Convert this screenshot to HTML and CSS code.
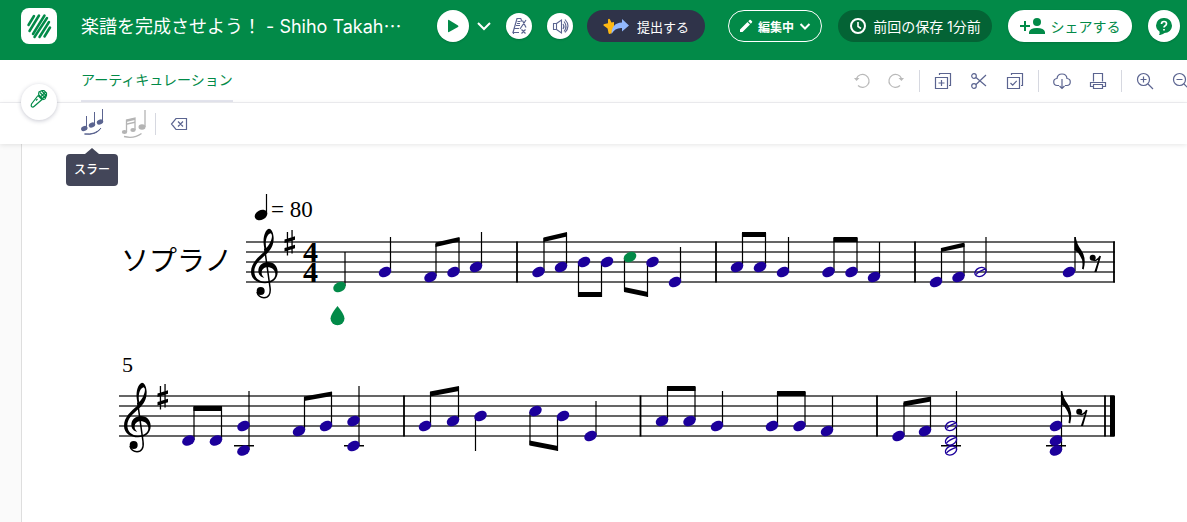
FILE: index.html
```html
<!DOCTYPE html>
<html lang="ja">
<head>
<meta charset="utf-8">
<meta name="viewport" content="width=device-width, initial-scale=1">
<title>楽譜を完成させよう！</title>
<link rel="stylesheet" href="styles.css">
</head>
<body>
<header class="topbar">
  <a class="logo" href="#" aria-label="ホーム">
    <svg width="36" height="36" viewBox="0 0 36 36" fill="none" stroke="#028a48" stroke-width="2.500" stroke-linecap="round"><path d="M7.500 17 13 8M8.500 23 18 7.500M12 26 23.500 7.500M13.500 29 26 10M18.500 29 28 14M23.500 28.500 29 19.500"/></svg>
  </a>
  <h1 class="title">楽譜を完成させよう！ - Shiho Takah<span class="dots">…</span></h1>
  <div class="player">
    <button class="round" aria-label="再生"><svg width="32" height="32" viewBox="0 0 32 32"><path d="M11 10.500v11q0 1 1 .5L21 17q1-.8 0-1.600L12 10q-1-.5-1 .5z" fill="#028a48"/></svg></button>
    <button class="caret" aria-label="再生オプション"><svg width="16" height="16" viewBox="0 0 16 16" fill="none" stroke="#fff" stroke-width="2"><path d="M2 5l6 6 6-6"/></svg></button>
  </div>
  <button class="round small metronome" aria-label="メトロノーム"><svg width="26" height="26" viewBox="0 0 26 26" fill="none" stroke="#5b6490" stroke-width="1.200"><path d="M15 5.500h-4L7 19.500h6M15 5.500l.5 3M11.500 8.500h3M11 10.500h3M10 12.500h4M8.500 15.500H13M20 7l-6 9M16.500 7.500l3.500 7M7.500 19.500V21M15.500 16.500l4 4M19.500 16.500l-4 4"/></svg></button>
  <button class="round small sound" aria-label="音量"><svg width="26" height="26" viewBox="0 0 26 26" fill="none" stroke="#5b6490" stroke-width="1.100"><path d="M6.500 10.500v6h3v-6zM9.500 10.500l5-3.500v13l-5-3.500M16 11q2 2.500 0 5M17 8.500q4 5 0 10M18 6.500q6 6.500 0 13"/></svg></button>
  <button class="pill submit">
    <svg width="26" height="18" viewBox="0 0 26 18"><path d="M5 2.500q1-1.500 2 0l1.500 3 2.500-.5V13l-3 3.500q-2 1-2.500-.5l-.9-4.500L.500 8.500Q0 7 1.500 7L5 6.300z" fill="#fdb813"/><path d="M8.500 17Q8.500 6 19 5.500V2l7 6.500-7 6V11q-7-.5-10.500 6z" fill="#92b9ff"/></svg>
    提出する</button>
  <button class="pill mode">
    <svg width="14" height="14" viewBox="0 0 14 14" fill="#fff"><path d="M1 10.500 8.500 3 11 5.500 3.500 13H1zM9.300 2.200l1.200-1.200q.6-.5 1.200 0L13 2.300q.5.600 0 1.200l-1.200 1.200z"/></svg>
    編集中
    <svg width="12" height="12" viewBox="0 0 12 12" fill="none" stroke="#fff" stroke-width="2"><path d="M1.500 4 6 8.500 10.500 4"/></svg></button>
  <button class="pill saved">
    <svg width="18" height="18" viewBox="0 0 18 18" fill="none" stroke="#fff" stroke-width="2"><circle cx="9" cy="9" r="7"/><path d="M9 5v4.500l3 2" stroke-width="1.600"/></svg>
    前回の保存 1分前</button>
  <button class="pill share">
    <svg width="26" height="18" viewBox="0 0 26 18" fill="#028a48"><path d="M4 4h2v4h4v2H6v4H4v-4H0V8h4z"/><circle cx="17" cy="5" r="4"/><path d="M9 17v-2q1-4 8-4t8 4v2z"/></svg>
    シェアする</button>
  <button class="round help" aria-label="ヘルプ"><svg width="32" height="32" viewBox="0 0 32 32"><path d="M16 8a7.500 7.500 0 0 1 8 7.500c0 4.500-3.500 7.500-7.500 7.500-2 1.500-4 2-5.500 2q1-1.500.5-3.500A7.500 7.500 0 0 1 8 15.500 7.500 7.500 0 0 1 16 8z" fill="#028a48"/><path d="M13.500 14q0-2.500 2.500-2.500t2.500 2.200q0 1.300-1.300 2.100T16 17.500M16 19v1.600" fill="none" stroke="#fff" stroke-width="1.700"/></svg></button>
</header>

<nav class="tabs">
  <a class="tab" href="#">アーティキュレーション</a>
  <div class="tools">
    <div class="group history">
      <button aria-label="元に戻す" disabled><svg class="ico" viewBox="0 0 24 24"><path d="M6.500 9.500A6.500 6.500 0 1 1 8 16.500"/><path class="solid" d="M4 9h5.500L6.500 12z"/></svg></button>
      <button aria-label="やり直す" disabled><svg class="ico" viewBox="0 0 24 24"><path d="M17.500 9.500A6.500 6.500 0 1 0 16 16.500"/><path class="solid" d="M20 9h-5.500l3 3z"/></svg></button>
    </div>
    <div class="group">
      <button aria-label="コピー"><svg class="ico" viewBox="0 0 24 24"><path d="M4.500 8.500h12v11h-12zM8.500 6V4.500h11v12H18M10.500 11v6M7.500 14h6"/></svg></button>
      <button aria-label="切り取り"><svg class="ico" viewBox="0 0 24 24"><circle cx="7" cy="7" r="2.300"/><circle cx="7" cy="17" r="2.300"/><path d="M9 8.500l10 8.500M9 15.500 19 6"/></svg></button>
      <button aria-label="貼り付け"><svg class="ico" viewBox="0 0 24 24"><path d="M4.500 8.500h12v11h-12zM8.500 6V4.500h11v12H18M7.500 14l2.200 2.200 4-4.400"/></svg></button>
    </div>
    <div class="group">
      <button aria-label="ダウンロード"><svg class="ico" viewBox="0 0 24 24"><path d="M9 16.500H7.500a3.500 3.500 0 0 1-.5-7Q7.500 5 12 5t5 4.500a3.500 3.500 0 0 1-.5 7H15M12 10v9.500M9.500 17l2.500 2.500 2.500-2.500"/></svg></button>
      <button aria-label="印刷"><svg class="ico" viewBox="0 0 24 24"><path d="M7.500 12.500v-8h9v8M7.500 17.500h-3v-4h15v4h-3M7.500 15.500h9v4h-9z"/></svg></button>
    </div>
    <div class="group">
      <button aria-label="拡大"><svg class="ico" viewBox="0 0 24 24"><circle cx="10.500" cy="10.500" r="6"/><path d="M15 15l5 5M10.500 7.500v6M7.500 10.500h6"/></svg></button>
      <button aria-label="縮小"><svg class="ico" viewBox="0 0 24 24"><circle cx="10.500" cy="10.500" r="6"/><path d="M15 15l5 5M7.500 10.500h6"/></svg></button>
    </div>
  </div>
  <button class="mic" aria-label="パート"><svg width="20" height="20" viewBox="0 0 20 20" fill="none" stroke="#028a48" stroke-width="1.200"><path d="M9 6.500 2.500 15q-.8 2 .3 2.800t2.500-.5L13 10.500M9 6.500l4 4M9.500 5.500l4.500 5 2-.5M9.500 5.500l.5-2.500 3-1.500h2l2.500 2.500v2.500L16 10M11 3.500l5.500 5.500M13 2l4 4.500M16.500 3 11.500 8M17.500 5.500 13.500 9.500M7 11.500l1.500-1.500"/></svg></button>
</nav>

<div class="articulations">
  <div class="slur">
    <button aria-label="スラー" aria-describedby="slur-tip"><svg width="24" height="30" viewBox="0 0 24 30" fill="#5b6490"><ellipse cx="3.300" cy="21.500" rx="3.300" ry="2.500" transform="rotate(-20 3.300 21.500)"/><ellipse cx="11" cy="18" rx="3.300" ry="2.500" transform="rotate(-20 11 18)"/><ellipse cx="19" cy="15" rx="3.300" ry="2.500" transform="rotate(-20 19 15)"/><path d="M5.500 9v12M13.500 5v13M21.500 2v13" stroke="#5b6490"/><path d="M3.500 27q12 1.500 16.500-6-5.500 7-16.500 6z" stroke="#5b6490" stroke-width="1"/></svg></button>
    <span class="tip" id="slur-tip" role="tooltip">スラー</span>
  </div>
  <button class="phrase" aria-label="フレーズ" disabled><svg width="26" height="30" viewBox="0 0 26 30" fill="#b4b4b4"><ellipse cx="3.500" cy="23" rx="2.700" ry="2"/><ellipse cx="12" cy="21" rx="2.700" ry="2"/><ellipse cx="21" cy="18" rx="3.500" ry="2.700"/><path d="M5.500 23v-12l8.500-2v12M24 1v17" fill="none" stroke="#b4b4b4" stroke-width="1.300"/><path d="M5 11l9-2v2l-9 2zM5 14.500l9-2v1.500l-9 2z"/><path d="M3 27.500q10 2.500 17.500-3" fill="none" stroke="#b4b4b4" stroke-width="1.300"/></svg></button>
  <button class="clear" aria-label="削除"><svg width="18" height="14" viewBox="0 0 18 14" fill="none" stroke="#5b6490"><path d="M6 1.500h10.500v11H6L1.500 7zM8 4.500l5 5M13 4.500l-5 5" stroke-width="1.200"/></svg></button>
</div>

<main class="workspace">
  <section class="sheet" aria-label="楽譜">
    <svg class="score" viewBox="22 144 1165 378">
      <defs>
        <ellipse id="n" rx="6.600" ry="4.800" transform="rotate(-27)"/>
        <g id="h" fill="none" stroke="#1c009b"><ellipse rx="5.900" ry="4.200" stroke-width="1.300" transform="rotate(-25)"/><path d="M-4.500 2.500Q-2-.5 4.500-2.800" stroke-width="1.300"/></g>
        <g id="clef" transform="translate(245 222) scale(.3333)">
          <path fill-rule="evenodd" d="M72 20C60 24 54 44 56 66 57 76 59 84 60 88 38 106 18 124 18 150 18 172 38 184 60 184 84 184 98 170 98 150 98 132 86 120 69 120 52 120 40 132 40 146 40 158 48 166 58 167 52 162 50 158 50 152 50 142 58 136 68 136 80 136 91 144 91 157 91 170 78 179 60 179 42 179 28 168 28 148 28 128 44 114 62 98 78 84 86 70 86 48 86 34 80 20 72 20zM77 34C84 38 80 52 76 60 73 67 68 73 64 78 60 62 63 38 77 34z"/>
          <path d="M59 80 75 196C78 217 70 227 57 227 47 227 38 220 36 210" fill="none" stroke="#000" stroke-width="4.500"/>
          <circle cx="47" cy="207" r="12"/>
        </g>
        <path id="sharp" d="M286.800 232h1.300v23.500h-1.300zM291.400 230h1.300v23.500h-1.300zM284.500 239.500l10.500-3.300v3.600l-10.500 3.300zM284.500 248l10.500-3.300v3.600L284.500 251.600z"/>
        <path id="flag" d="M0 0h1.200q1 7 5.500 13 5.500 8 2.500 19.500l-1.700-.7q1.700-8-2-13Q4 15.500 0 13z"/>
        <g id="rest"><circle cx="-2.800" cy="-4.700" r="3"/><path d="M-2.500-2.300Q1.500-2.500 4-6.800L5.500-6.300 1 9.500h-2.200L2.800-2.800Q0-.5-2.500-1.800z"/></g>
      </defs>

      <path class="staff" d="M246 242h869M246 252h869M246 262h869M246 272h869M246 282h869M119 396h995M119 406h995M119 416h995M119 426h995M119 436h995"/>
      <path class="bars" d="M517 241.500v41M716 241.500v41M915 241.500v41M1114 241.500v41M404 395.500v41M640.500 395.500v41M877 395.500v41M1105 395.500v41"/>
      <path d="M1110 395.500h5v41h-5z"/>
      <use href="#clef"/><use href="#sharp"/>
      <use href="#clef" x="-127" y="154"/><use href="#sharp" x="-127" y="154"/>

      <text class="part" x="121" y="271">ソプラノ</text>
      <text class="meter" x="303" y="262">4</text>
      <text class="meter" x="303" y="282">4</text>
      <text class="tempo" x="271" y="217">= 80</text>
      <text class="number" x="122" y="372">5</text>
      <use href="#n" x="261" y="215"/>

      <path class="stems" d="M266.500 194v20M345 252v34M390.500 237v34M436 244v32M459 238v33M481.500 232v34M544 238v33M566.500 233v33M578.500 263v34M601.500 263v34M624.500 258v33M647.500 263v34M680.500 247v34M742.500 233v33M765.500 233v33M788.500 237v34M834 238v33M857 238v33M879.500 242v34M941.500 248v33M964 244v32M986 237v34M1075 237v34
      M194 407v33M221.500 407v33M249 391v59M304.500 397v33M331.500 392v33M359 386v59M430.500 392v33M458.500 387v33M475.500 417v34M530 412v33M557.500 417v34M596 401v34M667.500 387v33M695 387v33M722.500 391v34M777.500 392v33M805 392v33M832.500 396v34M904 403v32M930.500 397v33M956.500 391v59M1061.500 391v59"/>
      <path class="ledgers" d="M234 445.800h20M344 445.800h20M941 445.800h20M1046 445.800h20"/>
      <path class="beams" d="M435.500 242.500l24-5.500v4.500l-24 5.500zM543.500 237.500l23.500-5.500v4.500l-23.500 5.500zM578 292h24v5h-24zM624 287l24 5v5l-24-5zM742 232h24v5h-24zM833.500 237h24v5h-24zM941 248l23.500-5.500v4.500L941 252zM193.500 406h28.500v5h-28.500zM304 396.500l28-5v4.500l-28 5zM430 391.500l29-5.500v5l-29 5.500zM529.500 440.500l28.500 5.500v5l-28.500-5.500zM667 386h28.500v5h-28.500zM777 391h28.500v5h-28.500zM903.500 401.500l27.500-5v5l-27.500 5z"/>
      <use href="#flag" x="1074.500" y="237"/><use href="#flag" x="1061" y="391"/>
      <use href="#rest" x="1095.500" y="262.500"/><use href="#rest" x="1082" y="416.500"/>

      <g class="notes">
        <use href="#n" x="385" y="272"/><use href="#n" x="430.500" y="277"/><use href="#n" x="453.500" y="272"/><use href="#n" x="476" y="267"/>
        <use href="#n" x="538.500" y="272"/><use href="#n" x="561" y="267"/><use href="#n" x="584" y="262"/><use href="#n" x="607" y="262"/><use href="#n" x="652.500" y="262"/><use href="#n" x="675" y="282"/>
        <use href="#n" x="737" y="267"/><use href="#n" x="760" y="267"/><use href="#n" x="783" y="272"/><use href="#n" x="828.500" y="272"/><use href="#n" x="851.500" y="272"/><use href="#n" x="874" y="277"/>
        <use href="#n" x="936" y="282"/><use href="#n" x="958.500" y="277"/><use href="#h" x="980.500" y="272"/><use href="#n" x="1069" y="272"/>
        <use href="#n" x="188.500" y="440.500"/><use href="#n" x="216" y="440.500"/><use href="#n" x="243.500" y="426"/><use href="#n" x="243.500" y="450.500"/><use href="#n" x="299" y="431"/><use href="#n" x="326" y="426"/><use href="#n" x="353.500" y="421"/><use href="#n" x="353.500" y="446"/>
        <use href="#n" x="425" y="426"/><use href="#n" x="453" y="421"/><use href="#n" x="480.500" y="416"/><use href="#n" x="535.500" y="411"/><use href="#n" x="563" y="416"/><use href="#n" x="590.500" y="436"/>
        <use href="#n" x="662" y="421"/><use href="#n" x="689.500" y="421"/><use href="#n" x="717" y="426"/><use href="#n" x="772" y="426"/><use href="#n" x="799.500" y="426"/><use href="#n" x="827" y="431"/>
        <use href="#n" x="898.500" y="436"/><use href="#n" x="925" y="431"/><use href="#h" x="951" y="426"/><use href="#h" x="951" y="440.500"/><use href="#h" x="951" y="450.500"/><use href="#n" x="1056" y="426"/><use href="#n" x="1056" y="440.500"/><use href="#n" x="1056" y="450.500"/>
      </g>
      <g class="active">
        <use href="#n" x="339.500" y="287"/><use href="#n" x="630" y="257"/>
        <path d="M337.500 306q7 8.500 7 12.500a7 6.700 0 0 1-14 0q0-4 7-12.500z"/>
      </g>
    </svg>
  </section>
</main>
</body>
</html>
```

FILE: styles.css
```css
* { box-sizing: border-box; }

body {
  margin: 0;
  background: #fff;
  font-family: Inter, "Noto Sans CJK JP", sans-serif;
  font-size: 14px;
  overflow-x: hidden;
}

button {
  display: inline-flex;
  align-items: center;
  justify-content: center;
  flex: none;
  margin: 0;
  padding: 0;
  border: 0;
  background: none;
  color: inherit;
  font: inherit;
  white-space: nowrap;
}

svg { display: block; flex: none; }

.topbar {
  display: flex;
  align-items: center;
  height: 60px;
  padding: 0 7px 8px 21px;
  background: #028a48;
  color: #fff;
}

.logo {
  flex: none;
  border-radius: 8px;
  background: #fff;
}

.title {
  flex: 1;
  min-width: 0;
  margin: 0 24px;
  overflow: hidden;
  font-size: 18px;
  font-weight: 400;
  line-height: 28px;
  white-space: nowrap;
}

.dots { font-family: "Noto Sans CJK JP", sans-serif; }

.player { display: flex; align-items: center; gap: 7px; }

.round {
  width: 32px;
  height: 32px;
  border-radius: 50%;
  background: #fff;
  box-shadow: 0 1px 2px rgba(0, 0, 0, .15);
}

.small { width: 26px; height: 26px; }
.metronome { margin-left: 14px; }
.sound { margin-left: 15px; }

.pill {
  height: 32px;
  border-radius: 16px;
}

.submit {
  gap: 8px;
  width: 118px;
  margin-left: 14px;
  background: #2f3349;
  font-size: 13px;
}

.mode {
  gap: 5px;
  width: 94px;
  margin-left: 23px;
  border: 1px solid #fff;
  font-size: 12px;
  font-weight: 700;
}

.saved {
  gap: 6px;
  width: 154px;
  margin-left: 16px;
  background: #046335;
}

.share {
  gap: 5px;
  width: 124px;
  margin: 0 16px;
  background: #fff;
  color: #028a48;
  box-shadow: 0 1px 2px rgba(0, 0, 0, .15);
}

.tabs {
  position: relative;
  display: flex;
  justify-content: space-between;
  height: 43px;
  padding-left: 81px;
  border-bottom: 1px solid #f0f0f3;
}

.tab {
  border-bottom: 2px solid #e4e5ee;
  color: #028a48;
  line-height: 40px;
  text-decoration: none;
  white-space: nowrap;
}

.tools {
  display: flex;
  align-items: center;
  margin-right: -6px;
}

.group {
  display: flex;
  align-items: center;
  gap: 12px;
  height: 22px;
  padding: 0 11px;
  border-right: 1px solid #d6d8e0;
  color: #5b6490;
}

.group:last-child { padding-right: 0; border-right: 0; }
.history { gap: 10px; color: #b9b9b9; }

.ico {
  width: 24px;
  height: 24px;
  fill: none;
  stroke: currentColor;
  stroke-width: 1.2;
}

.solid { fill: currentColor; stroke: none; }

.mic {
  position: absolute;
  top: 24px;
  left: 21px;
  z-index: 2;
  width: 36px;
  height: 36px;
  padding-bottom: 6px;
  border-radius: 50%;
  background: #fff;
  box-shadow: 0 1px 4px rgba(30, 34, 70, .25);
}

.articulations {
  position: relative;
  z-index: 1;
  display: flex;
  align-items: center;
  height: 41px;
  padding-left: 81px;
  background: #fff;
  box-shadow: 0 1px 5px rgba(0, 0, 0, .1);
}

.slur { position: relative; }
.phrase { margin-left: 16px; }

.clear {
  height: 22px;
  margin-left: 8px;
  padding-left: 14px;
  border-left: 1px solid #d6d8e0;
}

.tip {
  position: absolute;
  top: 47px;
  left: -15px;
  padding: 0 8px;
  border-radius: 4px;
  background: #434659;
  color: #fff;
  font-size: 12px;
  font-weight: 500;
  line-height: 32px;
  white-space: nowrap;
}

.tip::before {
  content: "";
  position: absolute;
  bottom: 100%;
  left: 50%;
  margin-left: -7px;
  border: 7px solid transparent;
  border-top-width: 0;
  border-bottom: 6px solid #434659;
}

.workspace { padding-left: 21px; background: #fafafa; }

.sheet {
  border-left: 1px solid #dedede;
  background: #fff;
}

.score { width: 100%; height: auto; }
.staff { stroke: #333; stroke-width: 1.4; }
.bars { stroke: #000; stroke-width: 1.8; }
.stems { fill: none; stroke: #000; stroke-width: 1.2; }
.ledgers { stroke: #000; stroke-width: 1.6; }
.notes { fill: #1c009b; }
.active { fill: #028a48; }

.part { font-family: "Noto Sans CJK JP", sans-serif; font-size: 28px; }
.meter, .tempo, .number { font-family: "Liberation Serif", serif; }
.meter { font-size: 30px; font-weight: 700; }
.tempo { font-size: 23px; }
.number { font-size: 22px; }
```
